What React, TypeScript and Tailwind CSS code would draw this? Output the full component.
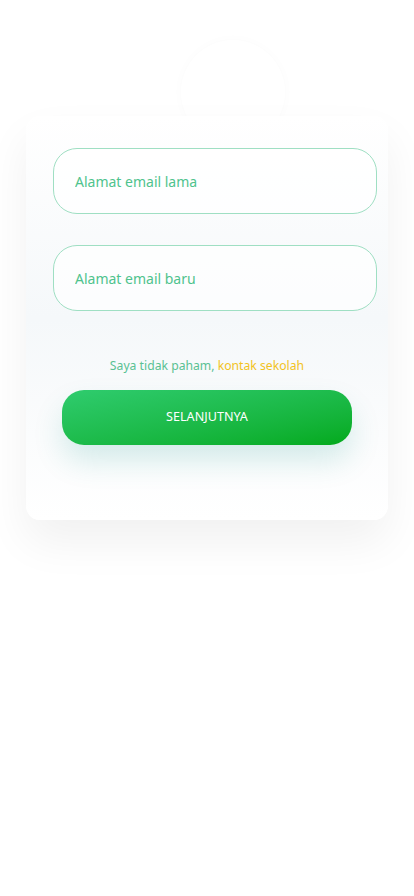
const fieldClass =
   "w-[324px] h-[66px] rounded-[24px] border border-[#9fdfc3] bg-white/70 px-[21px] text-[14px] text-[#4fc38d] placeholder:text-[#4fc38d] outline-none"

const App = () => {
   return (
      <div
         className="min-h-[896px] w-[414px] bg-white pt-[40px]"
         style={{ fontFamily: '"Noto Sans", "Open Sans", sans-serif' }}
      >
         <div className="mx-auto h-[104px] w-[104px] translate-x-[26px] rounded-full bg-white shadow-[0_0_12px_rgba(0,0,0,0.018)]" />

         <div className="relative mx-[26px] -mt-[28px] h-[404px] rounded-[14px] bg-gradient-to-b from-white via-[#f5f8fa] to-white pt-[32px] shadow-[0_22px_45px_rgba(0,0,0,0.06)]">
            <div className="flex flex-col gap-[31px] pl-[27px]">
               <input className={fieldClass} placeholder="Alamat email lama" />
               <input className={fieldClass} placeholder="Alamat email baru" />
            </div>

            <p className="mt-[45px] text-center text-[12.2px] leading-[20px] text-[#5ac193]">
               Saya tidak paham, <span className="text-[#f2c31d]">kontak sekolah</span>
            </p>

            <button className="mx-auto mt-[14px] block h-[55px] w-[290px] rounded-[22px] bg-gradient-to-br from-[#2fcc6e] to-[#03aa1a] text-[12.6px] text-white shadow-[0_16px_30px_rgba(0,140,130,0.16)]">
               SELANJUTNYA
            </button>
         </div>
      </div>
   )
}

export default App
